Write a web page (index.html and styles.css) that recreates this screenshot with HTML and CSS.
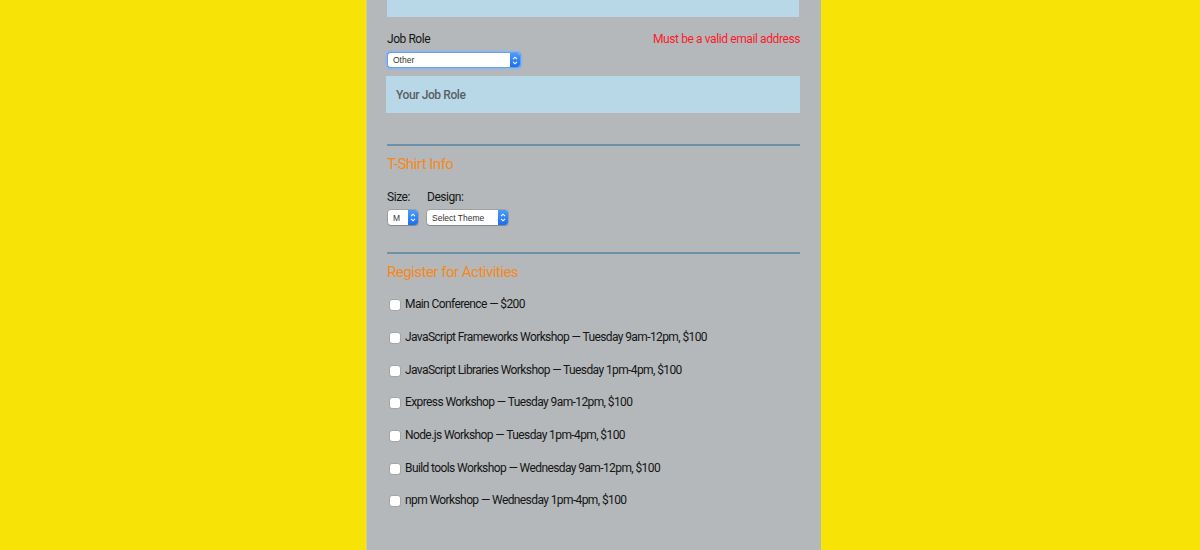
FILE: index.html
```html
<!DOCTYPE html>
<html>
<head>
<meta charset="utf-8">
<link rel="stylesheet" href="styles.css">
</head>
<body>
<div class="page">
  <form class="form">
    <div class="input-top"></div>
    <div class="label-row">
      <span class="label">Job Role</span>
      <span class="error">Must be a valid email address</span>
    </div>
    <div class="select select-focus select-job">
      <span class="select-text">Other</span>
      <span class="select-arrow"><svg width="6" height="9" viewBox="0 0 6 9"><path d="M1 3.2 L3 1.2 L5 3.2 M1 5.8 L3 7.8 L5 5.8" fill="none" stroke="#fff" stroke-width="1.1"/></svg></span>
    </div>
    <div class="text-input">Your Job Role</div>

    <hr class="rule rule-first">
    <h3 class="section-title">T-Shirt Info</h3>
    <div class="shirt-row">
      <div class="shirt-col">
        <span class="label">Size:</span>
        <div class="select select-size">
          <span class="select-text">M</span>
          <span class="select-arrow"><svg width="6" height="9" viewBox="0 0 6 9"><path d="M1 3.2 L3 1.2 L5 3.2 M1 5.8 L3 7.8 L5 5.8" fill="none" stroke="#fff" stroke-width="1.1"/></svg></span>
        </div>
      </div>
      <div class="shirt-col">
        <span class="label">Design:</span>
        <div class="select select-design">
          <span class="select-text">Select Theme</span>
          <span class="select-arrow"><svg width="6" height="9" viewBox="0 0 6 9"><path d="M1 3.2 L3 1.2 L5 3.2 M1 5.8 L3 7.8 L5 5.8" fill="none" stroke="#fff" stroke-width="1.1"/></svg></span>
        </div>
      </div>
    </div>

    <hr class="rule rule-second">
    <h3 class="section-title">Register for Activities</h3>
    <ul class="activities">
      <li><span class="check"></span>Main Conference — $200</li>
      <li><span class="check"></span>JavaScript Frameworks Workshop — Tuesday 9am-12pm, $100</li>
      <li><span class="check"></span>JavaScript Libraries Workshop — Tuesday 1pm-4pm, $100</li>
      <li><span class="check"></span>Express Workshop — Tuesday 9am-12pm, $100</li>
      <li><span class="check"></span>Node.js Workshop — Tuesday 1pm-4pm, $100</li>
      <li><span class="check"></span>Build tools Workshop — Wednesday 9am-12pm, $100</li>
      <li><span class="check"></span>npm Workshop — Wednesday 1pm-4pm, $100</li>
    </ul>
  </form>
</div>
</body>
</html>
```
FILE: styles.css
```css
html, body {
  margin: 0;
  padding: 0;
}
body {
  background: #f7e305;
  font-family: Roboto, "Liberation Sans", sans-serif;
  color: #1d1d1f;
}
.page {
  display: flex;
  height: 550px;
  overflow: hidden;
}
.form {
  margin-left: 366px;
  width: 455px;
  min-height: 550px;
  box-sizing: border-box;
  background: #b4b8ba;
  border-left: 1px solid #cfcc9a;
  padding: 0 21px 0 20px;
}
.input-top {
  height: 17px;
  background: #b8d8e8;
  margin-right: 1px;
}
.label-row {
  display: flex;
  justify-content: space-between;
  align-items: center;
  margin-top: 14px;
  height: 16px;
}
.label {
  font-size: 12px;
  letter-spacing: -0.45px;
  color: #151515;
  line-height: 16px;
}
.error {
  font-size: 12px;
  letter-spacing: -0.4px;
  color: #fb1a2b;
  line-height: 16px;
  margin-right: 0;
}
.select {
  display: flex;
  align-items: center;
  justify-content: space-between;
  box-sizing: border-box;
  background: #fff;
  border-radius: 3px;
  box-shadow: 0 0 0 0.5px rgba(0,0,0,0.25), 0 1px 1px rgba(0,0,0,0.15);
  height: 15px;
  overflow: hidden;
}
.select-text {
  font-size: 8.5px;
  color: #333;
  padding-left: 5px;
  font-family: "Liberation Sans", Arial, sans-serif;
}
.select-arrow {
  width: 10px;
  height: 100%;
  background: linear-gradient(#4d9bf8, #1a6ef2);
  display: flex;
  align-items: center;
  justify-content: center;
}
.select-job {
  margin-top: 6px;
  margin-left: 1px;
  width: 132px;
  height: 14px;
}
.select-focus {
  box-shadow: 0 0 0 1px #6e9ee0, 0 0 0 2.5px #8db6ec;
}
.select-size {
  width: 30px;
  margin-top: 5px;
  margin-left: 1px;
}
.select-design {
  width: 81px;
  margin-top: 5px;
}
.text-input {
  margin-top: 9px;
  margin-left: -1px;
  height: 37px;
  background: #b8d8e8;
  display: flex;
  align-items: center;
  padding-left: 10px;
  font-size: 12px;
  letter-spacing: -0.4px;
  font-weight: 500;
  color: #5b5f63;
}
.rule {
  border: 0;
  height: 2px;
  background: #6d92a8;
  margin: 0;
}
.rule-first {
  margin-top: 31px;
}
.rule-second {
  margin-top: 27px;
}
.section-title {
  margin: 9px 0 0;
  font-size: 15px;
  letter-spacing: -0.5px;
  font-weight: 400;
  color: #f5891c;
  line-height: 18px;
}
.shirt-row {
  display: flex;
  gap: 9px;
  margin-top: 16px;
}
.shirt-col {
  display: flex;
  flex-direction: column;
  align-items: flex-start;
}
.activities {
  list-style: none;
  margin: 7px 0 0;
  padding: 0;
}
.activities li {
  display: flex;
  align-items: center;
  height: 32.67px;
  font-size: 12px;
  letter-spacing: -0.6px;
  color: #151515;
  padding-left: 3px;
}
.check {
  width: 10px;
  height: 10px;
  background: #fff;
  border-radius: 2px;
  box-shadow: 0 0 0 0.5px rgba(0,0,0,0.2);
  margin-right: 5px;
  margin-top: 2px;
}
```
